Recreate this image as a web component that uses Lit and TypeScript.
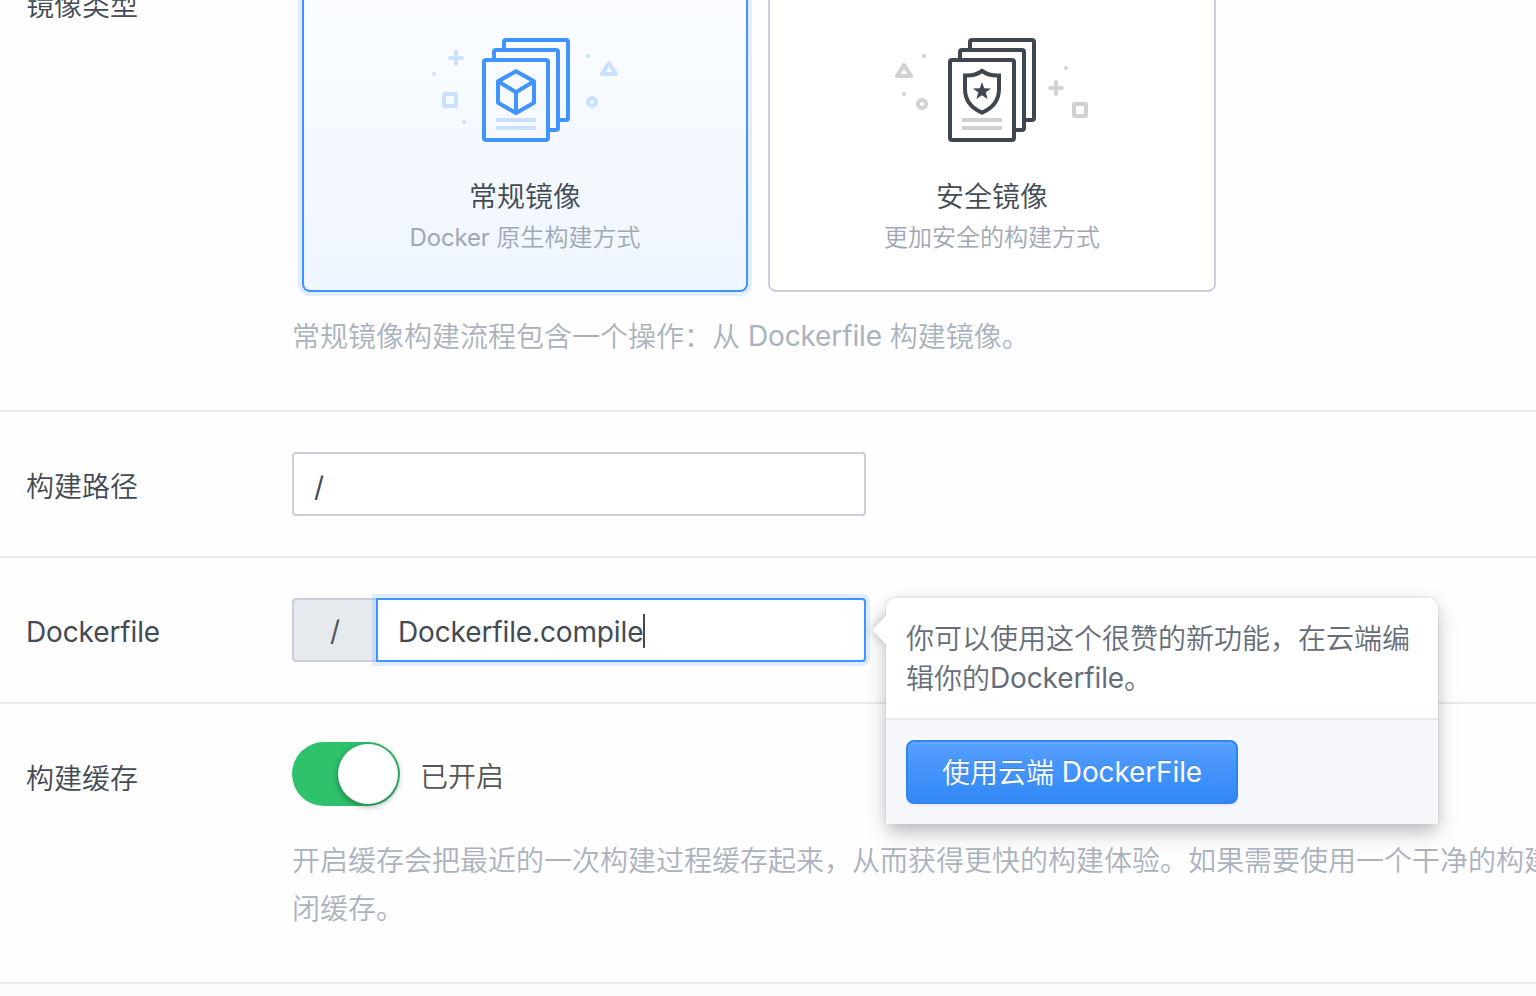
import { LitElement, html, svg, css } from "lit";
import { customElement, state } from "lit/decorators.js";

const pages = (x: number) => svg`
  <path class="s" d="M${x + 22} 49V42q0-2 2-2h60q2 0 2 2v76q0 2-2 2h-8"/>
  <path class="s" d="M${x + 12} 59V52q0-2 2-2h60q2 0 2 2v76q0 2-2 2h-8"/>
  <rect class="s" x=${x + 2} y="60" width="64" height="80" rx="2"/>
  <path class="t" d="M${x + 14} 120h40M${x + 14} 128h40"/>`;

const plus = (x: number, y: number) =>
  svg`<path class="t r" d="M${x - 6} ${y}h12M${x} ${y - 6}v12"/>`;
const dot = (x: number, y: number) => svg`<circle class="f" cx=${x} cy=${y} r="2"/>`;
const ring = (x: number, y: number) => svg`<circle class="t" cx=${x} cy=${y} r="4"/>`;
const square = (x: number, y: number) =>
  svg`<rect class="t" x=${x - 6} y=${y - 6} width="12" height="12" rx="1"/>`;
const triangle = (x: number, y: number) =>
  svg`<path class="t r" d="M${x} ${y + 3}l-7 11h14z"/>`;

@customElement("app-root")
export class AppRoot extends LitElement {
  @state() private file = "Dockerfile.compile";

  static styles = css`
    :host {
      display: block;
      width: 100%;
      height: 996px;
      overflow: hidden;
      background: #fafcfc;
      color: #434a54;
      font: 350 28px/40px Inter, "Noto Sans CJK SC", sans-serif;
    }
    * { box-sizing: border-box; }
    .row {
      display: flex;
      background: #fefefe;
      border-bottom: 2px solid #e6e9ed;
      padding-left: 26px;
    }
    .label { width: 266px; flex: none; white-space: nowrap; }
    .body { flex: 1; min-width: 0; }
    .latin { font-weight: 400; letter-spacing: -.13px; }
    .en { font-weight: 400; letter-spacing: -.13px; line-height: 1; vertical-align: 1px; }
    .types { height: 412px; }
    .types .label { margin-top: -14px; }
    .cards { display: flex; gap: 20px; padding-left: 10px; height: 292px; }
    .card {
      width: 448px;
      border: 2px solid #cccfdb;
      border-top: 0;
      border-radius: 0 0 8px 8px;
      background: #fff;
      padding-top: 25px;
      text-align: center;
    }
    .card.on {
      width: 446px;
      border-color: #3f94ff;
      background: linear-gradient(#fafcff, #eff6ff);
      box-shadow: 0 0 0 4px #e1edfd;
    }
    .art { display: block; margin: 0 auto 21px; width: 210px; height: 130px; fill: none; stroke-width: 4; }
    .blue { --main: #3f94ff; --tint: #c9e0ff; }
    .dark { --main: #3f4650; --tint: #d0d1d3; }
    .s { stroke: var(--main); }
    .t { stroke: var(--tint); }
    .f { fill: var(--tint); }
    .m { fill: var(--main); }
    .r { stroke-linecap: round; stroke-linejoin: round; }
    .name { line-height: 42px; }
    .sub { font-size: 24px; line-height: 40px; color: #a0a7b4; }
    .sub .en { vertical-align: 0; }
    .help { color: #aab2bd; }
    .types .help { margin-top: 25px; }
    .field { height: 146px; padding-top: 40px; }
    .field .label { padding-top: 15px; }
    .field .label.latin { padding-top: 14px; }
    .input {
      width: 574px;
      height: 64px;
      border: 2px solid #cccfdb;
      border-radius: 4px;
      background: #fff;
      padding: 13px 20px 0;
      line-height: 40px;
    }
    .group { position: relative; display: flex; width: 574px; }
    .addon {
      width: 84px;
      height: 64px;
      background: #e6e9ed;
      border: 2px solid #cccfdb;
      border-right: 0;
      border-radius: 4px 0 0 4px;
      text-align: center;
      padding: 11px 0 0;
      color: #555;
    }
    .input.focus {
      display: flex;
      width: 490px;
      padding-top: 12px;
      border-color: #3f94ff;
      border-radius: 0 4px 4px 0;
      box-shadow: 0 0 0 4px rgba(63, 148, 255, .16);
    }
    .caret { width: 2px; height: 34px; margin-top: 2px; background: #434a54; }
    .pop {
      position: absolute;
      z-index: 2;
      left: 594px;
      top: 0;
      width: 552px;
      height: 226px;
      border-radius: 10px 10px 0 0;
      box-shadow: 0 -1px 0 1px rgba(0, 0, 0, .04), 0 10px 20px -2px rgba(67, 74, 84, .34), 0 2px 14px rgba(67, 74, 84, .1);
      color: #656d78;
    }
    .pop::before {
      content: "";
      position: absolute;
      left: -10px;
      top: 22px;
      width: 20px;
      height: 20px;
      border-radius: 0 0 0 3px;
      background: #fff;
      transform: rotate(45deg);
      box-shadow: -2px 2px 8px rgba(67, 74, 84, .25);
    }
    .msg {
      position: relative;
      height: 122px;
      padding: 21px 20px 0;
      background: #fff;
      border-bottom: 2px solid #e6e9ed;
      border-radius: 10px 10px 0 0;
    }
    .foot { position: relative; height: 104px; padding: 20px; background: #f5f7fa; }
    .btn {
      display: block;
      width: 332px;
      height: 64px;
      border: 2px solid #2d85f2;
      border-radius: 8px;
      background: linear-gradient(#559eff, #3288f5);
      box-shadow: inset 0 2px 0 rgba(255, 255, 255, .1), 0 2px 2px rgba(0, 0, 0, .06);
      color: #fff;
      font: inherit;
      padding: 2px 0 0;
      text-shadow: 0 -1px 0 rgba(0, 0, 0, .12);
      white-space: nowrap;
    }
    .cache { height: 280px; padding-top: 38px; }
    .cache .label { padding-top: 17px; }
    .line { display: flex; align-items: center; gap: 20px; height: 64px; color: #555; }
    .switch {
      display: flex;
      justify-content: flex-end;
      width: 108px;
      height: 64px;
      padding: 2px;
      border-radius: 32px;
      background: #2fc26c;
    }
    .knob { width: 60px; height: 60px; border-radius: 50%; background: #fff; box-shadow: 0 2px 6px rgba(0, 0, 0, .4); }
    .cache .text { padding-top: 5px; }
    .cache .help { margin-top: 31px; line-height: 48px; white-space: nowrap; overflow: hidden; }
  `;

  render() {
    return html`
      <section class="row types">
        <div class="label">镜像类型</div>
        <div class="body">
          <div class="cards">
            <div class="card on">
              <svg class="art blue" viewBox="420 25 210 130">
                ${pages(482)}
                <path class="s" stroke-linejoin="round" d="M516 71.3l18 10v21.5l-18 10.2-18-10.2V81.3zM498 81.3l18 11 18-11M516 92.3V113"/>
                ${plus(456, 58)}${dot(434, 74)}${square(450, 100)}${dot(464, 122)}
                ${dot(588, 56)}${triangle(609, 60)}${ring(592, 102)}
              </svg>
              <div class="name">常规镜像</div>
              <div class="sub"><span class="en">Docker</span> 原生构建方式</div>
            </div>
            <div class="card">
              <svg class="art dark" viewBox="887 25 210 130">
                ${pages(948)}
                <path class="s" d="M982 71q-7 5-17 4.500V89c0 11 5 18.500 17 23.600 12-5.100 17-12.600 17-23.600V75.500Q989 76 982 71z"/>
                <path class="m" d="M982 82l2.200 6.200 6.800.2-5.300 4.100 1.900 6.500-5.600-3.800-5.600 3.800 1.900-6.500-5.300-4.100 6.800-.2z"/>
                ${triangle(904, 62)}${dot(924, 56)}${dot(904, 94)}${ring(922, 104)}
                ${dot(1066, 68)}${plus(1056, 88)}${square(1080, 110)}
              </svg>
              <div class="name">安全镜像</div>
              <div class="sub">更加安全的构建方式</div>
            </div>
          </div>
          <div class="help">常规镜像构建流程包含一个操作：从 <span class="en">Dockerfile</span> 构建镜像。</div>
        </div>
      </section>
      <section class="row field">
        <div class="label">构建路径</div>
        <div class="body"><div class="input latin">/</div></div>
      </section>
      <section class="row field">
        <div class="label latin">Dockerfile</div>
        <div class="body">
          <div class="group">
            <div class="addon latin">/</div>
            <div class="input focus latin"><span>${this.file}</span><i class="caret"></i></div>
            <div class="pop">
              <div class="msg">你可以使用这个很赞的新功能，在云端编辑你的<span class="en">Dockerfile</span>。</div>
              <div class="foot"><button class="btn">使用云端 <span class="en">DockerFile</span></button></div>
            </div>
          </div>
        </div>
      </section>
      <section class="row cache">
        <div class="label">构建缓存</div>
        <div class="body">
          <div class="line">
            <div class="switch"><div class="knob"></div></div>
            <span class="text">已开启</span>
          </div>
          <div class="help">开启缓存会把最近的一次构建过程缓存起来，从而获得更快的构建体验。如果需要使用一个干净的构建<br />闭缓存。</div>
        </div>
      </section>
    `;
  }
}
